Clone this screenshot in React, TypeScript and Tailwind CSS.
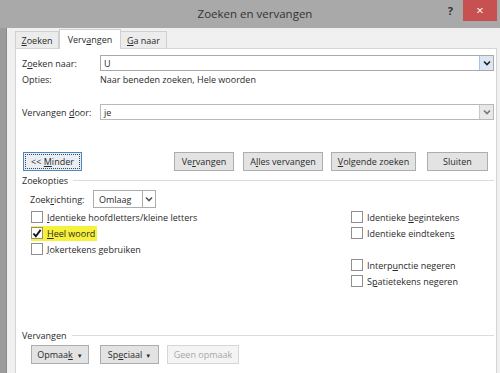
import React from "react";

const U = ({ children }: { children: React.ReactNode }) => <span className="underline underline-offset-[1px]">{children}</span>;

const Chevron = ({ color = "#222" }: { color?: string }) => (
  <svg width="8" height="6" viewBox="0 0 8 6">
    <path d="M1 1.5 L4 4.5 L7 1.5" fill="none" stroke={color} strokeWidth="1.6" />
  </svg>
);

const Btn = ({ children, w, disabled }: { children: React.ReactNode; w: string; disabled?: boolean }) => (
  <div
    className={`${w} h-[19px] flex items-center justify-center border ${
      disabled ? "border-[#d6d6d6] bg-[#f4f4f4] text-[#a8a8a8]" : "border-[#adadad] bg-[#e3e3e3] text-[#2a2a2a]"
    }`}
  >
    <span className="whitespace-pre">{children}</span>
  </div>
);

const Check = ({ checked }: { checked?: boolean }) => (
  <div className="w-[12px] h-[12px] border border-[#8f8f8f] bg-white flex items-center justify-center shrink-0">
    {checked && (
      <svg width="11" height="11" viewBox="0 0 11 11">
        <path d="M1.5 5.5 L4.2 8.5 L9.5 1.5" fill="none" stroke="#111" strokeWidth="2" />
      </svg>
    )}
  </div>
);

const Row = ({ checked, children, hl }: { checked?: boolean; children?: React.ReactNode; hl?: boolean }) => (
  <div className="h-[16px] flex items-center">
    {children !== undefined && (
      <div className={`flex items-center gap-[4px] h-[15px] pr-[2px] ${hl ? "bg-[#f7f13a]" : ""}`}>
        <Check checked={checked} />
        <span>{children}</span>
      </div>
    )}
  </div>
);

export default function App() {
  return (
    <div
      className="w-[500px] h-[373px] bg-[#a9a9a9] flex flex-col overflow-hidden text-[9px] text-[#2a2a2a] leading-none"
      style={{ fontFamily: '"Open Sans", "Noto Sans", sans-serif' }}
    >
      <div className="h-[28px] relative flex items-center justify-center shrink-0">
        <span className="text-[11.5px] text-[#333] ml-[10px]">Zoeken en vervangen</span>
        <div className="absolute right-[3px] top-0 h-[21px] flex items-center">
          <span className="text-[#333] text-[11px] font-bold mr-[10px]">?</span>
          <div className="w-[34px] h-[21px] bg-[#c75050] flex items-center justify-center text-white text-[13px]">×</div>
        </div>
      </div>
      <div className="flex-1 flex">
        <div className="w-[7px] bg-[#9c9c9c] border-r border-[#8a8a8a]" />
        <div className="flex-1 bg-[#f0f0f0] pl-[8px] pr-[3px] flex flex-col">
          <div className="flex items-end h-[20px] shrink-0">
            <div className="w-[44px] h-[17px] border border-b-0 border-[#d0d0d0] bg-[#ececec] flex items-center justify-center">
              <span>
                <U>Z</U>oeken
              </span>
            </div>
            <div className="w-[62px] h-[20px] border border-b-0 border-[#d0d0d0] bg-white flex items-center justify-center -mb-px relative z-10">
              <span>
                Verv<U>a</U>ngen
              </span>
            </div>
            <div className="w-[46px] h-[17px] border border-b-0 border-l-0 border-[#d0d0d0] bg-[#ececec] flex items-center justify-center">
              <span>
                <U>G</U>a naar
              </span>
            </div>
          </div>
          <div className="flex-1 bg-white border border-b-0 border-[#d5d5d5] pl-[6px] pr-[2px] flex flex-col">
            {/* Zoeken naar */}
            <div className="mt-[6px] h-[16px] flex items-center">
              <div className="w-[78px]">
                Z<U>o</U>eken naar:
              </div>
              <div className="flex-1 h-[16px] border border-[#a9a9a9] flex items-center">
                <span className="pl-[3px] flex-1">U</span>
                <div className="w-[14px] h-[14px] bg-[#dce7f4] border-l border-[#a6c3e3] flex items-center justify-center">
                  <Chevron />
                </div>
              </div>
            </div>
            <div className="h-[16px] flex items-center">
              <div className="w-[78px]">Opties:</div>
              <span>Naar beneden zoeken, Hele woorden</span>
            </div>
            <div className="mt-[17px] h-[16px] flex items-center">
              <div className="w-[78px]">
                Vervangen <U>d</U>oor:
              </div>
              <div className="flex-1 h-[16px] border border-[#b9b9b9] flex items-center">
                <span className="pl-[3px] flex-1">je</span>
                <div className="w-[14px] h-[14px] bg-[#e8e8e8] border-l border-[#c8c8c8] flex items-center justify-center">
                  <Chevron color="#777" />
                </div>
              </div>
            </div>
            {/* buttons */}
            <div className="mt-[32px] h-[19px] flex items-center">
              <div className="ml-[1px] w-[59px] h-[19px] border border-[#4a86c0] bg-[#e9eef4] p-[1px]">
                <div className="w-full h-full border border-dotted border-[#444] flex items-center justify-center">
                  <span className="whitespace-pre">
                    {"<< "}
                    <U>M</U>inder
                  </span>
                </div>
              </div>
              <div className="ml-[92px]">
                <Btn w="w-[60px]">
                  Ve<U>r</U>vangen
                </Btn>
              </div>
              <div className="ml-[9px]">
                <Btn w="w-[80px]">
                  A<U>l</U>les vervangen
                </Btn>
              </div>
              <div className="ml-[8px]">
                <Btn w="w-[85px]">
                  <U>V</U>olgende zoeken
                </Btn>
              </div>
              <div className="ml-[11px]">
                <Btn w="w-[61px]">Sluiten</Btn>
              </div>
            </div>
            {/* Zoekopties */}
            <div className="mt-[2px] h-[14px] flex items-center">
              <span>Zoekopties</span>
              <div className="flex-1 h-px bg-[#dcdcdc] ml-[5px]" />
            </div>
            <div className="mt-[3px] h-[18px] flex items-center pl-[8px]">
              <div className="w-[63px]">
                Zoek<U>r</U>ichting:
              </div>
              <div className="w-[63px] h-[18px] border border-[#acacac] flex items-center">
                <span className="flex-1 pl-[5px]">Omlaag</span>
                <div className="w-[13px] h-[16px] border-l border-[#acacac] flex items-center justify-center">
                  <Chevron color="#555" />
                </div>
              </div>
            </div>
            <div className="mt-[1px] flex pl-[9px]">
              <div className="w-[320px] flex flex-col">
                <Row>
                  <U>I</U>dentieke hoofdletters/kleine letters
                </Row>
                <Row checked hl>
                  <U>H</U>eel woord
                </Row>
                <Row>
                  <U>J</U>okertekens gebruiken
                </Row>
              </div>
              <div className="flex flex-col">
                <Row>
                  Identieke <U>b</U>egintekens
                </Row>
                <Row>
                  Identieke eindteken<U>s</U>
                </Row>
                <Row />
                <Row>
                  Interp<U>u</U>nctie negeren
                </Row>
                <Row>
                  S<U>p</U>atietekens negeren
                </Row>
              </div>
            </div>
            <div className="mt-[39px] h-[14px] flex items-center">
              <span>Vervangen</span>
              <div className="flex-1 h-px bg-[#dcdcdc] ml-[5px]" />
            </div>
            <div className="mt-[3px] flex items-center pl-[9px]">
              <Btn w="w-[58px]">
                Opmaa<U>k</U>
                <span className="ml-[4px] text-[6px] align-middle">▼</span>
              </Btn>
              <div className="ml-[11px]">
                <Btn w="w-[59px]">
                  Sp<U>e</U>ciaal
                  <span className="ml-[3px] text-[6px] align-middle">▼</span>
                </Btn>
              </div>
              <div className="ml-[8px]">
                <Btn w="w-[72px]" disabled>
                  Geen opmaak
                </Btn>
              </div>
            </div>
          </div>
        </div>
      </div>
    </div>
  );
}
